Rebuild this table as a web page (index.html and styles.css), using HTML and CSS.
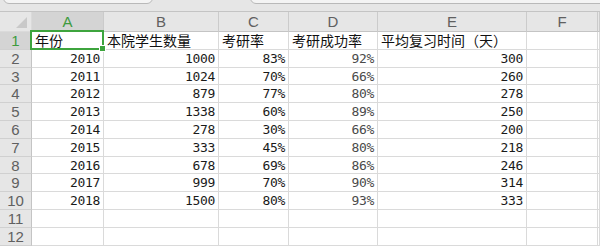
FILE: index.html
```html
<!DOCTYPE html>
<html lang="zh">
<head>
<meta charset="utf-8">
<title>Sheet</title>
<link rel="stylesheet" href="styles.css">
</head>
<body>
<div class="toolbar">
  <div class="box box-name"></div>
  <div class="box box-formula"></div>
</div>
<div class="sheet">
  <div class="corner"><span class="tri"></span></div>
  <div class="ch sel">A</div>
  <div class="ch">B</div>
  <div class="ch">C</div>
  <div class="ch">D</div>
  <div class="ch">E</div>
  <div class="ch">F</div>
  <div class="ch rest"></div>

  <div class="rh sel">1</div>
  <div class="c txt a1">年份<span class="selbox"><span class="handle"></span></span></div>
  <div class="c txt">本院学生数量</div>
  <div class="c txt">考研率</div>
  <div class="c txt">考研成功率</div>
  <div class="c txt">平均复习时间（天）</div>
  <div class="c"></div>
  <div class="c rest"></div>

  <div class="rh">2</div><div class="c n">2010</div><div class="c n">1000</div><div class="c n">83%</div><div class="c n p">92%</div><div class="c n">300</div><div class="c"></div><div class="c rest"></div>
  <div class="rh">3</div><div class="c n">2011</div><div class="c n">1024</div><div class="c n">70%</div><div class="c n p">66%</div><div class="c n">260</div><div class="c"></div><div class="c rest"></div>
  <div class="rh">4</div><div class="c n">2012</div><div class="c n">879</div><div class="c n">77%</div><div class="c n p">80%</div><div class="c n">278</div><div class="c"></div><div class="c rest"></div>
  <div class="rh">5</div><div class="c n">2013</div><div class="c n">1338</div><div class="c n">60%</div><div class="c n p">89%</div><div class="c n">250</div><div class="c"></div><div class="c rest"></div>
  <div class="rh">6</div><div class="c n">2014</div><div class="c n">278</div><div class="c n">30%</div><div class="c n p">66%</div><div class="c n">200</div><div class="c"></div><div class="c rest"></div>
  <div class="rh">7</div><div class="c n">2015</div><div class="c n">333</div><div class="c n">45%</div><div class="c n p">80%</div><div class="c n">218</div><div class="c"></div><div class="c rest"></div>
  <div class="rh">8</div><div class="c n">2016</div><div class="c n">678</div><div class="c n">69%</div><div class="c n p">86%</div><div class="c n">246</div><div class="c"></div><div class="c rest"></div>
  <div class="rh">9</div><div class="c n">2017</div><div class="c n">999</div><div class="c n">70%</div><div class="c n p">90%</div><div class="c n">314</div><div class="c"></div><div class="c rest"></div>
  <div class="rh">10</div><div class="c n">2018</div><div class="c n">1500</div><div class="c n">80%</div><div class="c n p">93%</div><div class="c n">333</div><div class="c"></div><div class="c rest"></div>
  <div class="rh">11</div><div class="c"></div><div class="c"></div><div class="c"></div><div class="c"></div><div class="c"></div><div class="c"></div><div class="c rest"></div>
  <div class="rh">12</div><div class="c"></div><div class="c"></div><div class="c"></div><div class="c"></div><div class="c"></div><div class="c"></div><div class="c rest"></div>
</div>
</body>
</html>
```

FILE: styles.css
```css
html, body {
  margin: 0;
  padding: 0;
  background: #ffffff;
  overflow: hidden;
  width: 600px;
  height: 246px;
}

.toolbar {
  height: 11px;
  background: #e6e6e6;
  border-bottom: 1px solid #c4c4c4;
  display: flex;
  align-items: flex-end;
  overflow: hidden;
}

.box {
  height: 14px;
  margin-bottom: 7px;
  border: 1px solid #b9b9b9;
  border-radius: 6px;
  background: #f4f4f4;
  box-sizing: border-box;
  flex: none;
}

.box-name {
  margin-left: 3px;
  width: 150px;
}

.box-formula {
  margin-left: 97px;
  width: 360px;
}

.sheet {
  display: grid;
  grid-template-columns: 32px 72px 115px 70px 89px 149px 71px 1fr;
  grid-template-rows: 20px repeat(12, 17.8px);
  font-family: "Liberation Sans", Arial, sans-serif;
}

.sheet > div {
  box-sizing: border-box;
  border-right: 1px solid #dadada;
  border-bottom: 1px solid #dadada;
  overflow: visible;
  white-space: nowrap;
}

.corner {
  background: #e6e6e6;
  position: relative;
}

.tri {
  position: absolute;
  right: 4px;
  bottom: 3px;
  width: 0;
  height: 0;
  border-left: 11px solid transparent;
  border-bottom: 11px solid #c9c9c9;
}

.sheet > .ch {
  background: #e6e6e6;
  border-right: 1px solid #cbcbcb;
  border-bottom: 1px solid #c4c4c4;
  color: #606060;
  font-size: 15px;
  text-align: center;
  line-height: 20px;
}

.sheet > .ch.sel {
  background: #d4d4d4;
  color: #3e9b3e;
}

.sheet > .rh {
  background: #e6e6e6;
  border-right: 1px solid #c4c4c4;
  border-bottom: 1px solid #d0d0d0;
  color: #606060;
  font-size: 15px;
  text-align: center;
  line-height: 17px;
}

.sheet > .rh.sel {
  background: #d4d4d4;
  color: #3e9b3e;
}

.c {
  font-size: 12.5px;
  line-height: 17px;
  color: #222;
}

.c.txt {
  font-family: "Noto Sans CJK SC", "Liberation Sans", sans-serif;
  font-size: 14px;
  padding-left: 3px;
  line-height: 17px;
  color: #111;
}

.c.n {
  font-family: "DejaVu Sans Mono", "Liberation Mono", monospace;
  text-align: right;
  padding-right: 3px;
  font-size: 13px;
  letter-spacing: -0.3px;
  color: #1a1a1a;
}

.c.p {
  color: #4a4a4a;
}

.a1 {
  position: relative;
}

.selbox {
  position: absolute;
  left: -2px;
  top: -2px;
  right: -1px;
  bottom: -1px;
  border: 2px solid #3da43d;
  pointer-events: none;
}

.handle {
  position: absolute;
  right: -4px;
  bottom: -4px;
  width: 5px;
  height: 5px;
  background: #3da43d;
  border: 1px solid #ffffff;
}
```
